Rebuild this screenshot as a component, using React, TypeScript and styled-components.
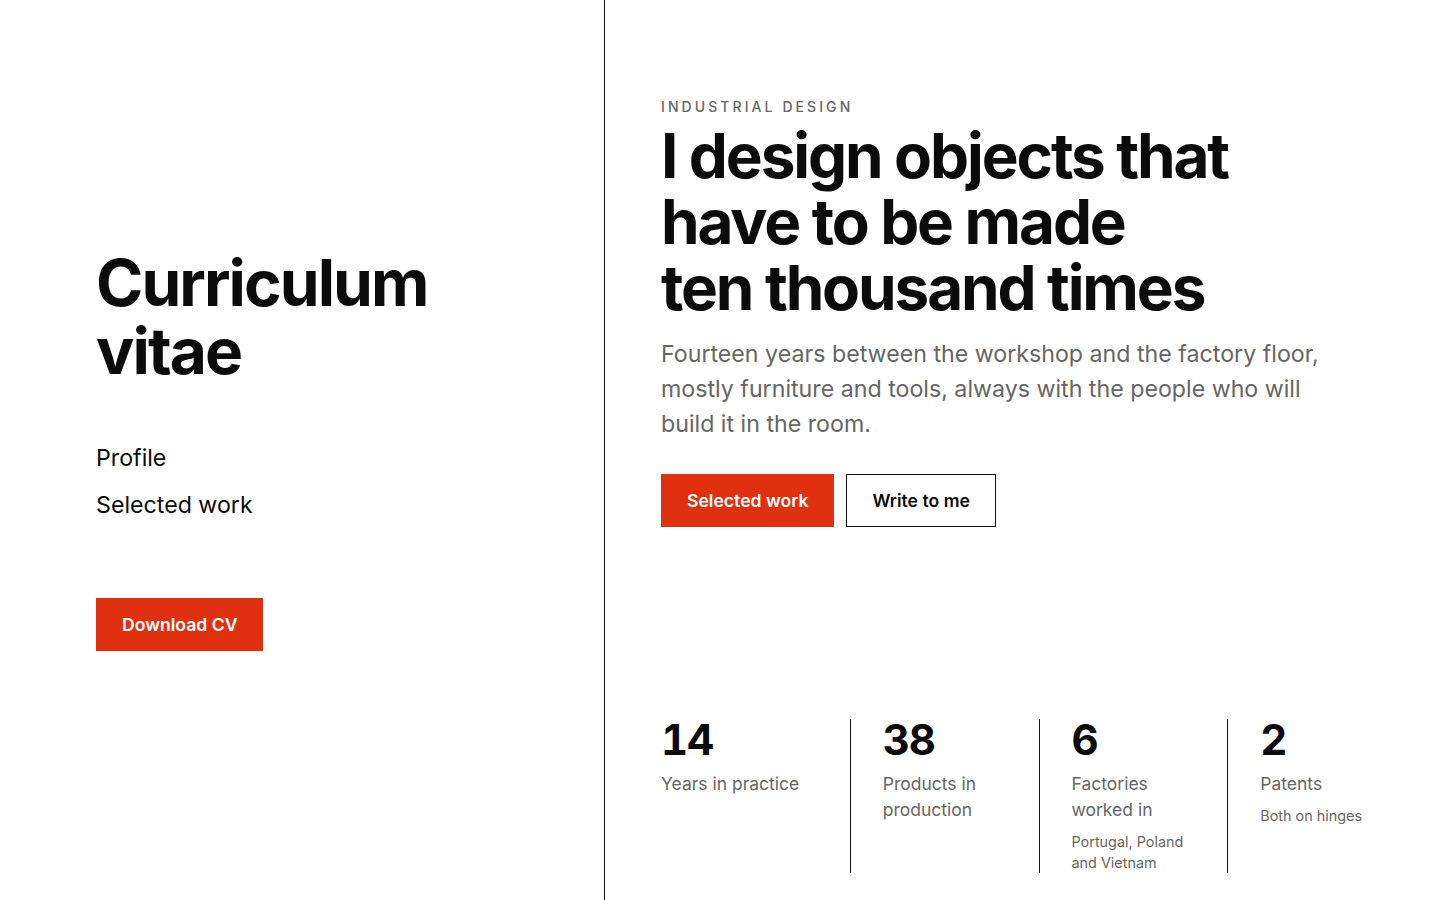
import React from 'react';
import styled, { createGlobalStyle } from 'styled-components';

const GlobalStyle = createGlobalStyle`
    * {
        box-sizing: border-box;
    }
    html, body {
        margin: 0;
        padding: 0;
        background: #ffffff;
        font-family: Inter, "Noto Sans", sans-serif;
        color: #0b0b0b;
    }
`

type IStat = {
    value: string,
    label: string,
    note?: string,
}

const stats: IStat[] = [
    { value: '14', label: 'Years in practice' },
    { value: '38', label: 'Products in production' },
    { value: '6', label: 'Factories worked in', note: 'Portugal, Poland and Vietnam' },
    { value: '2', label: 'Patents', note: 'Both on hinges' },
];

const App: React.FC = () => {
    return (
        <>
            <GlobalStyle />
            <Page>
                <Sidebar>
                    <SideInner>
                        <Title>Curriculum<br />vitae</Title>
                        <Nav>
                            <NavLink href="#profile">Profile</NavLink>
                            <NavLink href="#work">Selected work</NavLink>
                        </Nav>
                        <Button $variant="primary">Download CV</Button>
                    </SideInner>
                </Sidebar>
                <Main>
                    <Intro>
                        <Eyebrow>Industrial design</Eyebrow>
                        <Headline>
                            I design objects that have to be made<br />
                            ten thousand times
                        </Headline>
                        <Lead>
                            Fourteen years between the workshop and the factory floor,
                            mostly furniture and tools, always with the people who will
                            build it in the room.
                        </Lead>
                        <Actions>
                            <Button $variant="primary">Selected work</Button>
                            <Button $variant="outline">Write to me</Button>
                        </Actions>
                    </Intro>
                    <Stats>
                        {stats.map((s) => (
                            <Stat key={s.value}>
                                <StatValue>{s.value}</StatValue>
                                <StatLabel>{s.label}</StatLabel>
                                {s.note && <StatNote>{s.note}</StatNote>}
                            </Stat>
                        ))}
                    </Stats>
                </Main>
            </Page>
        </>
    );
};

export default App;

const Page = styled.div`
    display: grid;
    grid-template-columns: 605px 1fr;
    height: 900px;
`

const Sidebar = styled.aside`
    border-right: 1px solid #111111;
    display: flex;
    flex-direction: column;
    justify-content: center;
    padding: 0 40px 0 96px;
`

const SideInner = styled.div`
    display: flex;
    flex-direction: column;
    align-items: flex-start;
`

const Title = styled.h1`
    margin: 0 0 57px;
    font-size: 64px;
    line-height: 68px;
    font-weight: 700;
    letter-spacing: -0.03em;
`

const Nav = styled.nav`
    display: flex;
    flex-direction: column;
    gap: 14px;
    margin-bottom: 76px;
`

const NavLink = styled.a`
    font-size: 23.2px;
    line-height: 33px;
    color: #0b0b0b;
    text-decoration: none;
`

const Button = styled.button<{ $variant: 'primary' | 'outline' }>`
    font-family: Inter, "Noto Sans", sans-serif;
    font-size: 17.6px;
    font-weight: 600;
    line-height: 21px;
    padding: 15px 25px;
    border: 1px solid ${(p) => (p.$variant === 'primary' ? '#df300f' : '#111111')};
    background: ${(p) => (p.$variant === 'primary' ? '#df300f' : '#ffffff')};
    color: ${(p) => (p.$variant === 'primary' ? '#ffffff' : '#0b0b0b')};
    border-radius: 0;
    cursor: pointer;
`

const Main = styled.main`
    display: flex;
    flex-direction: column;
    justify-content: space-between;
    padding: 97px 24px 27px 56px;
`

const Intro = styled.div`
    display: flex;
    flex-direction: column;
    align-items: flex-start;
`

const Eyebrow = styled.div`
    font-size: 14px;
    line-height: 20px;
    font-weight: 500;
    letter-spacing: 0.22em;
    text-transform: uppercase;
    color: #666666;
`

const Headline = styled.h2`
    margin: 6px 0 16px;
    max-width: 600px;
    font-size: 62px;
    line-height: 66px;
    font-weight: 700;
    letter-spacing: -0.034em;
`

const Lead = styled.p`
    margin: 0 0 32px;
    max-width: 672px;
    font-size: 23.2px;
    line-height: 35px;
    color: #666666;
`

const Actions = styled.div`
    display: flex;
    gap: 12px;
`

const Stats = styled.div`
    display: grid;
    grid-template-columns: repeat(4, 1fr);
`

const Stat = styled.div`
    padding-left: 32px;
    border-left: 1px solid #111111;

    &:first-child {
        padding-left: 0;
        border-left: none;
    }
`

const StatValue = styled.div`
    font-size: 42px;
    line-height: 42px;
    font-weight: 700;
    letter-spacing: -0.03em;
    font-variant-numeric: tabular-nums;
    margin: 0 0 10px;
`

const StatLabel = styled.div`
    font-size: 17.5px;
    line-height: 26px;
    color: #666666;
    max-width: 142px;
`

const StatNote = styled.div`
    margin-top: 8px;
    font-size: 14.4px;
    line-height: 21px;
    color: #666666;
    max-width: 130px;
`
